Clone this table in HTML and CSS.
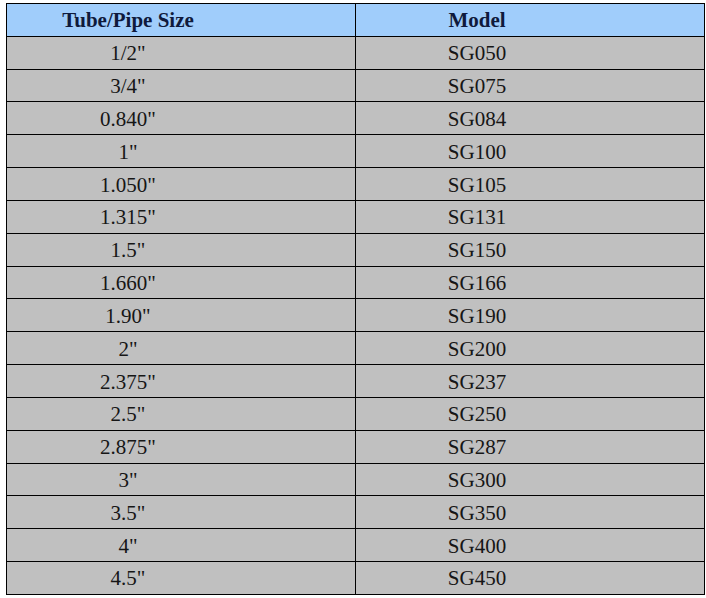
FILE: index.html
```html
<!DOCTYPE html>
<html lang="en">
<head>
<meta charset="utf-8">
<title>Tube/Pipe Size and Model</title>
<link rel="stylesheet" href="styles.css">
</head>
<body>
<div class="size-table" role="table">
  <div class="cell head" role="columnheader">Tube/Pipe Size</div>
  <div class="cell head" role="columnheader">Model</div>
  <div class="cell">1/2"</div><div class="cell">SG050</div>
  <div class="cell">3/4"</div><div class="cell">SG075</div>
  <div class="cell">0.840"</div><div class="cell">SG084</div>
  <div class="cell">1"</div><div class="cell">SG100</div>
  <div class="cell">1.050"</div><div class="cell">SG105</div>
  <div class="cell">1.315"</div><div class="cell">SG131</div>
  <div class="cell">1.5"</div><div class="cell">SG150</div>
  <div class="cell">1.660"</div><div class="cell">SG166</div>
  <div class="cell">1.90"</div><div class="cell">SG190</div>
  <div class="cell">2"</div><div class="cell">SG200</div>
  <div class="cell">2.375"</div><div class="cell">SG237</div>
  <div class="cell">2.5"</div><div class="cell">SG250</div>
  <div class="cell">2.875"</div><div class="cell">SG287</div>
  <div class="cell">3"</div><div class="cell">SG300</div>
  <div class="cell">3.5"</div><div class="cell">SG350</div>
  <div class="cell">4"</div><div class="cell">SG400</div>
  <div class="cell">4.5"</div><div class="cell">SG450</div>
</div>
</body>
</html>
```
FILE: styles.css
```css
html, body {
  margin: 0;
  background: #ffffff;
}
body {
  padding: 3px 0 0 6px;
  font-family: "Liberation Serif", "Times New Roman", serif;
}
.size-table {
  display: grid;
  grid-template-columns: 349px 349px;
  grid-auto-rows: 32.833px;
  width: 698px;
  border-top: 1px solid #000;
  border-left: 1px solid #000;
}
.cell {
  box-sizing: border-box;
  display: flex;
  align-items: center;
  justify-content: center;
  padding: 2px 106px 0 0;
  background: #c0c0c0;
  border-right: 1px solid #000;
  border-bottom: 1px solid #000;
  font-size: 21px;
  color: #161616;
  white-space: nowrap;
}
.head {
  background: #a0cdfb;
  font-weight: bold;
  color: #0f1a3c;
}
```
